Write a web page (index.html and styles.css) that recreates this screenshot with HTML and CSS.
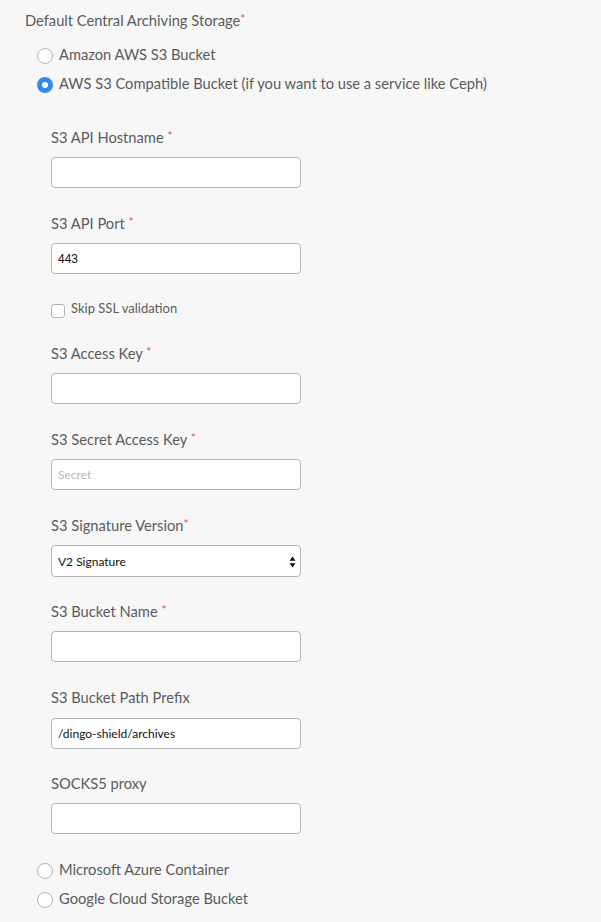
FILE: index.html
```html
<!DOCTYPE html>
<html>
<head>
<meta charset="utf-8">
<link rel="stylesheet" href="styles.css">
</head>
<body>
<div class="form">
  <div class="title">Default Central Archiving Storage<span class="req">*</span></div>
  <div class="options">
    <div class="radio-row"><span class="radio"></span><span class="opt-text">Amazon AWS S3 Bucket</span></div>
    <div class="radio-row"><span class="radio checked"></span><span class="opt-text">AWS S3 Compatible Bucket (if you want to use a service like Ceph)</span></div>
  </div>
  <div class="fields">
    <div class="field">
      <div class="label">S3 API Hostname <span class="req">*</span></div>
      <div class="input"></div>
    </div>
    <div class="field">
      <div class="label">S3 API Port <span class="req">*</span></div>
      <div class="input"><span class="val arial">443</span></div>
    </div>
    <div class="check-row"><span class="checkbox"></span><span class="check-text">Skip SSL validation</span></div>
    <div class="field">
      <div class="label">S3 Access Key <span class="req">*</span></div>
      <div class="input"></div>
    </div>
    <div class="field">
      <div class="label">S3 Secret Access Key <span class="req">*</span></div>
      <div class="input"><span class="placeholder">Secret</span></div>
    </div>
    <div class="field field-select">
      <div class="label">S3 Signature Version<span class="req">*</span></div>
      <div class="input select"><span class="val">V2 Signature</span>
        <svg class="arrows" width="7" height="12" viewBox="0 0 7 12"><path d="M3.5 0.5 L6.5 4.8 L0.5 4.8 Z" fill="#111"/><path d="M3.5 11.5 L6.5 7.2 L0.5 7.2 Z" fill="#111"/></svg>
      </div>
    </div>
    <div class="field">
      <div class="label">S3 Bucket Name <span class="req">*</span></div>
      <div class="input"></div>
    </div>
    <div class="field field-path">
      <div class="label">S3 Bucket Path Prefix</div>
      <div class="input"><span class="val">/dingo-shield/archives</span></div>
    </div>
    <div class="field">
      <div class="label">SOCKS5 proxy</div>
      <div class="input"></div>
    </div>
  </div>
  <div class="options bottom">
    <div class="radio-row"><span class="radio"></span><span class="opt-text">Microsoft Azure Container</span></div>
    <div class="radio-row"><span class="radio"></span><span class="opt-text">Google Cloud Storage Bucket</span></div>
  </div>
</div>
</body>
</html>
```
FILE: styles.css
```css
html, body {
  margin: 0;
  padding: 0;
  background: #f7f7f7;
}
body {
  font-family: "Lato", "Open Sans", sans-serif;
  color: #5b5b5b;
  width: 601px;
  height: 922px;
  overflow: hidden;
}
.form {
  padding: 10px 0 0 25px;
}
.title {
  font-size: 14.7px;
  line-height: 20px;
}
.req {
  color: #e4504c;
  font-size: 12px;
  vertical-align: top;
  line-height: 17px;
}
.options {
  margin-top: 14px;
  margin-left: 12px;
  display: flex;
  flex-direction: column;
  gap: 9px;
}
.radio-row {
  display: flex;
  align-items: center;
  height: 20px;
}
.radio {
  width: 14px;
  height: 14px;
  border: 1px solid #b4b4b4;
  border-radius: 50%;
  background: #fff;
  margin-top: 4px;
  flex: none;
  box-sizing: content-box;
}
.radio.checked {
  width: 6px;
  height: 6px;
  border: 5px solid #2f8bf0;
}
.opt-text {
  font-size: 14.7px;
  margin-left: 6px;
}
.fields {
  margin-left: 26px;
  margin-top: 34px;
  display: flex;
  flex-direction: column;
}
.field {
  margin-bottom: 25px;
}
.field-select {
  margin-bottom: 24px;
}
.field-path .label {
  margin-bottom: 11px;
}
.field-path {
  margin-bottom: 24px;
}
.label {
  font-size: 14.7px;
  line-height: 20px;
  margin-bottom: 10px;
}
.input {
  width: 242px;
  height: 29px;
  border: 1px solid #b5b5b5;
  border-radius: 4px;
  background: #fff;
  display: flex;
  align-items: center;
  padding-left: 6px;
  box-sizing: content-box;
  position: relative;
}
.input.select {
  height: 30px;
}
.val {
  font-size: 12px;
  color: #111;
}
.arial {
  font-family: "Liberation Sans", Arial, sans-serif;
}
.placeholder {
  font-size: 12px;
  color: #b8b8b8;
}
.arrows {
  position: absolute;
  right: 4px;
  top: 10px;
}
.check-row {
  display: flex;
  align-items: flex-start;
  margin-top: 1px;
  margin-bottom: 27px;
  height: 16px;
}
.checkbox {
  width: 12px;
  height: 12px;
  border: 1px solid #b5b5b5;
  border-radius: 3px;
  background: #fff;
  margin-top: 4px;
  flex: none;
}
.check-text {
  font-size: 13px;
  line-height: 16px;
  margin-left: 6px;
}
.bottom {
  margin-top: 0;
}
```
